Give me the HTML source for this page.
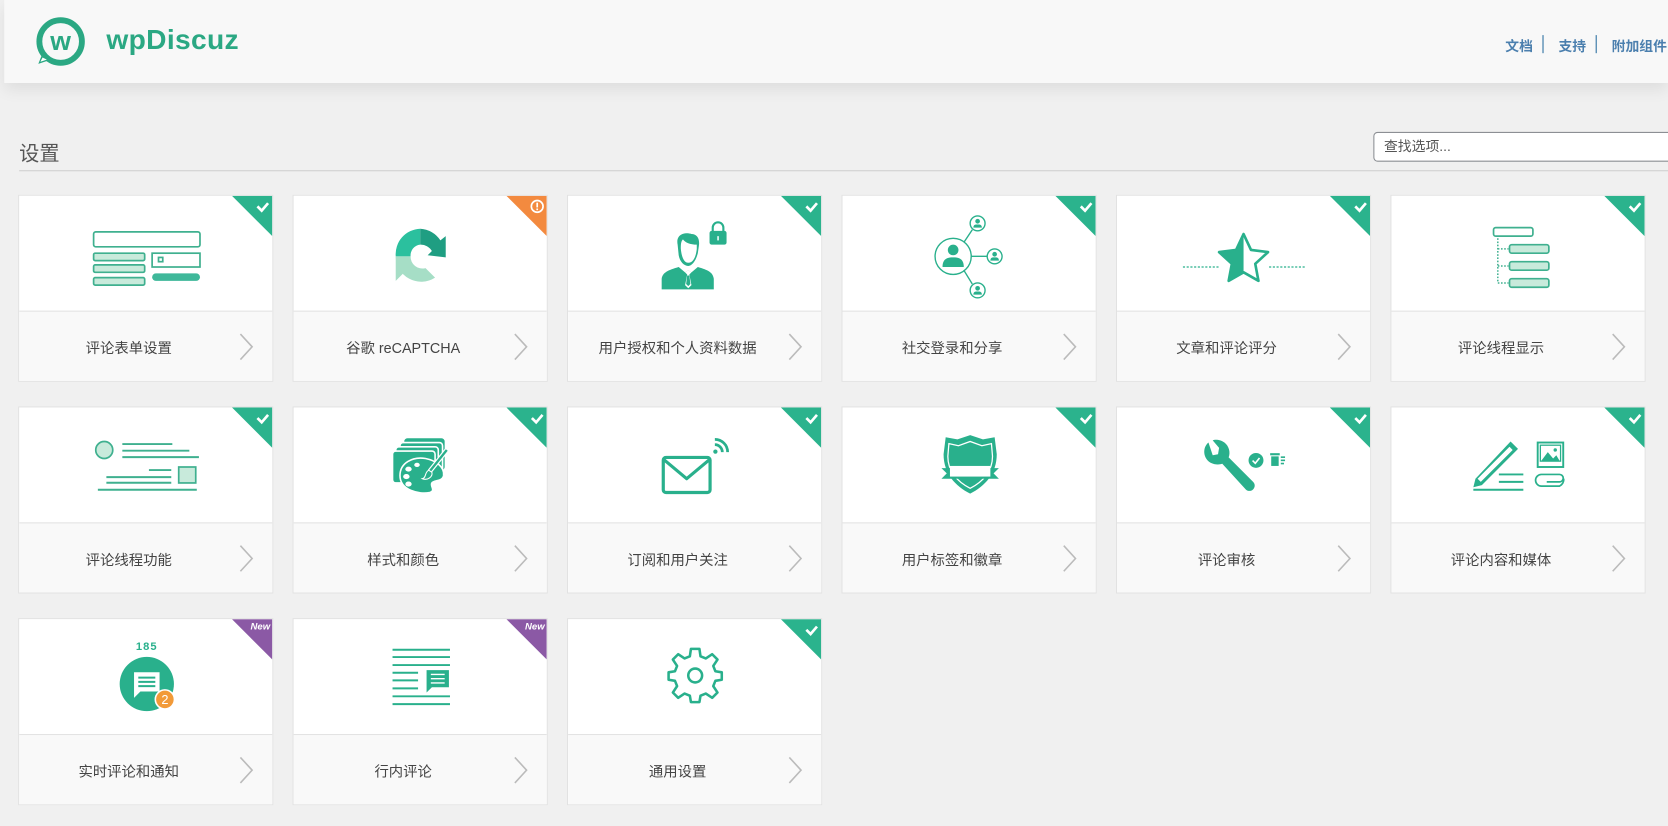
<!DOCTYPE html>
<html><head><meta charset="utf-8">
<style>
html,body{margin:0;padding:0;background:#f0f0f0;overflow:hidden;width:1668px;height:825px}
#w{position:absolute;left:0;top:0;width:1568px;height:776px;transform:scale(1.06378);transform-origin:0 0;font-family:"Liberation Sans","Noto Sans CJK SC",sans-serif}
.hdr{position:absolute;left:4px;top:0;width:1564px;height:78px;background:#f8f8f8;box-shadow:0 6px 14px rgba(0,0,0,0.08)}
.logo{position:absolute;left:96px;top:22px;font-size:26.5px;font-weight:bold;color:#2ba883;letter-spacing:0.3px}
.nav{position:absolute;top:33px;font-size:13px;font-weight:bold;color:#4b7fae}
.sep{position:absolute;top:33px;width:1px;height:17px;background:#2a6fa0}
.title{position:absolute;left:18px;top:130px;font-size:19px;color:#555}
.hl{position:absolute;left:18px;top:160px;width:1550px;height:1px;background:#cfcfcf}
.search{position:absolute;left:1291px;top:124px;width:290px;height:28px;border:1px solid #8c8f94;border-radius:4px;background:#fff;font-size:13px;color:#555;line-height:26px;padding-left:9px;box-sizing:border-box}
.card{position:absolute;width:240px;height:176px;background:#fff;border:1px solid #e2e2e2;box-sizing:border-box;overflow:hidden}
.card .ic{position:absolute;left:0;top:0;width:238px;height:108px}
.card .lb{position:absolute;left:0;top:108px;width:238px;height:66px;background:#f9f9f9;border-top:1px solid #e3e3e3}
.card .t{position:absolute;left:0;width:206px;top:23px;text-align:center;font-size:13.5px;color:#444}
.card .ch{position:absolute;left:207px;top:20px}
.card .tri{position:absolute;right:0;top:0}
</style></head><body><div id="w">
<div class="hdr">
<svg style="position:absolute;left:26px;top:14px" width="56" height="54" viewBox="0 0 56 54">
<circle cx="27" cy="25" r="20" fill="none" stroke="#2ba883" stroke-width="5.5"/>
<path d="M10 36 L6 46 L18 42 Z" fill="#2ba883"/>
<path d="M10 40 L8 44 L14 42Z" fill="#fff"/>
<text x="27" y="33" text-anchor="middle" font-family="Liberation Sans" font-weight="bold" font-size="25" fill="#2ba883">w</text>
</svg>
<div class="logo">wpDiscuz</div>
<div class="nav" style="left:1411px">文档</div><div class="sep" style="left:1446px"></div>
<div class="nav" style="left:1461px">支持</div><div class="sep" style="left:1496px"></div>
<div class="nav" style="left:1511px">附加组件</div>
</div>
<div class="title">设置</div>
<div class="hl"></div>
<div class="search">查找选项...</div>

<!-- Row 1 -->
<div class="card" style="left:17px;top:183px">
<svg class="ic" viewBox="0 0 238 108"><g stroke="#3fb08f" stroke-width="1.6">
<rect x="70" y="34" width="100" height="14" rx="2" fill="#fff"/>
<rect x="70" y="54" width="48" height="7" rx="1.5" fill="#c8eadb"/>
<rect x="70" y="65" width="48" height="7" rx="1.5" fill="#c8eadb"/>
<rect x="70" y="77" width="48" height="7" rx="1.5" fill="#c8eadb"/>
<rect x="125" y="54" width="45" height="13" fill="#fff"/>
<rect x="131" y="58" width="4" height="4" fill="#fff"/></g>
<rect x="125" y="73" width="45" height="7" rx="3.5" fill="#3fb89a"/></svg>
<div class="lb"><div class="t">评论表单设置</div><svg class="ch" width="14" height="26"><polyline points="1,1 12,13 1,25" fill="none" stroke="#bbb" stroke-width="1.5"/></svg></div>
<svg class="tri" width="38" height="38"><polygon points="0,0 38,0 38,38" fill="#2bb38d"/><polyline points="24,10 28,14 34,7" fill="none" stroke="#fff" stroke-width="2.5"/></svg>
</div>

<div class="card" style="left:275px;top:183px">
<svg class="ic" viewBox="0 0 238 108">
<path d="M119 31 A24 24 0 0 0 96 57 L110 57 A10 10 0 0 1 119 46 Z" fill="#2bc09e"/>
<path d="M119 31 A24 24 0 0 1 138 42 L143 38 L143 58 L126 56 L130 52 A12 12 0 0 0 119 46 Z" fill="#1f9e82"/>
<path d="M96 57 A24 24 0 0 0 133 77 L124 68 A11 11 0 0 1 110 57 Z" fill="#a6dec6"/>
<path d="M96 57 L96 80 L104 72 Z" fill="#a6dec6"/>
</svg>
<div class="lb"><div class="t">谷歌 reCAPTCHA</div><svg class="ch" width="14" height="26"><polyline points="1,1 12,13 1,25" fill="none" stroke="#bbb" stroke-width="1.5"/></svg></div>
<svg class="tri" width="38" height="38"><polygon points="0,0 38,0 38,38" fill="#f38a3f"/><circle cx="29" cy="10" r="5.5" fill="none" stroke="#fff" stroke-width="1.6"/><rect x="28.2" y="6.5" width="1.6" height="4.5" fill="#fff"/><rect x="28.2" y="12" width="1.6" height="1.6" fill="#fff"/></svg>
</div>

<div class="card" style="left:533px;top:183px">
<svg class="ic" viewBox="0 0 238 108" fill="#29b08c">
<path d="M103 46 C101 36 110 34 116 36 C121 36 124 40 123 47 L122 54 C120 62 116 66 113 66 C109 66 105 62 104 56 Z"/>
<path d="M106 50 C107 60 110 63 113 63 C117 63 120 59 121 50 L121 46 C115 46 110 44 108 41 C106 43 106 46 106 50 Z" fill="#fff"/>
<path d="M88 78 C89 72 94 70 104 67 L110 72 L113 70 L116 72 L122 67 C132 70 136 72 137 78 L137 88 L88 88 Z"/>
<path d="M110 72 L113 70 L116 72 L114 74 L116 84 L113 87 L110 84 L112 74 Z" fill="#fff"/>
<path d="M112 75 L114 75 L115 83 L113 85 L111 83 Z"/>
<rect x="133" y="33" width="16" height="13" rx="2"/>
<path d="M136 34 L136 30 A5 5 0 0 1 146 30 L146 34" fill="none" stroke="#29b08c" stroke-width="2"/>
<rect x="140.3" y="38" width="1.4" height="4" fill="#fff"/>
</svg>
<div class="lb"><div class="t">用户授权和个人资料数据</div><svg class="ch" width="14" height="26"><polyline points="1,1 12,13 1,25" fill="none" stroke="#bbb" stroke-width="1.5"/></svg></div>
<svg class="tri" width="38" height="38"><polygon points="0,0 38,0 38,38" fill="#2bb38d"/><polyline points="24,10 28,14 34,7" fill="none" stroke="#fff" stroke-width="2.5"/></svg>
</div>

<div class="card" style="left:791px;top:183px">
<svg class="ic" viewBox="0 0 238 108"><g stroke="#29b08c" stroke-width="1.3" fill="none">
<circle cx="104" cy="57" r="17"/><circle cx="127" cy="26" r="7"/><circle cx="143" cy="57" r="7"/><circle cx="127" cy="89" r="7"/>
<line x1="114" y1="44" x2="122" y2="32"/><line x1="121" y1="57" x2="136" y2="57"/><line x1="114" y1="70" x2="122" y2="83"/></g>
<g fill="#29b08c"><circle cx="104" cy="51" r="5"/><path d="M94 67 C94 59 99 58 104 58 C109 58 114 59 114 67 Z"/>
<circle cx="127" cy="24" r="2.2"/><path d="M123 30 C123 27 125 27 127 27 C129 27 131 27 131 30Z"/>
<circle cx="143" cy="55" r="2.2"/><path d="M139 61 C139 58 141 58 143 58 C145 58 147 58 147 61Z"/>
<circle cx="127" cy="87" r="2.2"/><path d="M123 93 C123 90 125 90 127 90 C129 90 131 90 131 93Z"/></g></svg>
<div class="lb"><div class="t">社交登录和分享</div><svg class="ch" width="14" height="26"><polyline points="1,1 12,13 1,25" fill="none" stroke="#bbb" stroke-width="1.5"/></svg></div>
<svg class="tri" width="38" height="38"><polygon points="0,0 38,0 38,38" fill="#2bb38d"/><polyline points="24,10 28,14 34,7" fill="none" stroke="#fff" stroke-width="2.5"/></svg>
</div>

<div class="card" style="left:1049px;top:183px">
<svg class="ic" viewBox="0 0 238 108">
<line x1="62" y1="67" x2="96" y2="67" stroke="#29b08c" stroke-width="1.2" stroke-dasharray="2,1.5"/>
<line x1="143" y1="67" x2="178" y2="67" stroke="#29b08c" stroke-width="1.2" stroke-dasharray="2,1.5"/>
<path d="M119 36 L126 51 L142 53 L130 64 L133 80 L119 72 L105 80 L108 64 L96 53 L112 51 Z" fill="none" stroke="#29b08c" stroke-width="2.5" stroke-linejoin="round"/>
<path d="M119 36 L112 51 L96 53 L108 64 L105 80 L119 72 Z" fill="#29b08c"/>
</svg>
<div class="lb"><div class="t">文章和评论评分</div><svg class="ch" width="14" height="26"><polyline points="1,1 12,13 1,25" fill="none" stroke="#bbb" stroke-width="1.5"/></svg></div>
<svg class="tri" width="38" height="38"><polygon points="0,0 38,0 38,38" fill="#2bb38d"/><polyline points="24,10 28,14 34,7" fill="none" stroke="#fff" stroke-width="2.5"/></svg>
</div>

<div class="card" style="left:1307px;top:183px">
<svg class="ic" viewBox="0 0 238 108"><g stroke="#3fb08f" stroke-width="1.6">
<rect x="96" y="30" width="37" height="8" rx="2" fill="#fff"/>
<rect x="111" y="46" width="37" height="8" rx="2" fill="#c8eadb"/>
<rect x="111" y="62" width="37" height="8" rx="2" fill="#c8eadb"/>
<rect x="111" y="78" width="37" height="8" rx="2" fill="#c8eadb"/></g>
<path d="M100 40 V82 M100 50 H110 M100 66 H110 M100 82 H110" stroke="#3fb08f" stroke-width="1.4" stroke-dasharray="1.5,1.5" fill="none"/></svg>
<div class="lb"><div class="t">评论线程显示</div><svg class="ch" width="14" height="26"><polyline points="1,1 12,13 1,25" fill="none" stroke="#bbb" stroke-width="1.5"/></svg></div>
<svg class="tri" width="38" height="38"><polygon points="0,0 38,0 38,38" fill="#2bb38d"/><polyline points="24,10 28,14 34,7" fill="none" stroke="#fff" stroke-width="2.5"/></svg>
</div>

<!-- Row 2 -->
<div class="card" style="left:17px;top:382px">
<svg class="ic" viewBox="0 0 238 108">
<circle cx="80" cy="40" r="8" fill="#c8eadb" stroke="#3fb08f" stroke-width="1.6"/>
<rect x="150" y="56" width="16" height="15" fill="#c8eadb" stroke="#3fb08f" stroke-width="1.6"/>
<g stroke="#3fb08f" stroke-width="1.8">
<line x1="97" y1="34.4" x2="144" y2="34.4"/><line x1="97" y1="40.7" x2="160" y2="40.7"/><line x1="97" y1="46.7" x2="169" y2="46.7"/>
<line x1="122" y1="58.9" x2="143" y2="58.9"/><line x1="82" y1="65.5" x2="143" y2="65.5"/><line x1="82" y1="70.8" x2="143" y2="70.8"/><line x1="74" y1="77.4" x2="167" y2="77.4"/></g></svg>
<div class="lb"><div class="t">评论线程功能</div><svg class="ch" width="14" height="26"><polyline points="1,1 12,13 1,25" fill="none" stroke="#bbb" stroke-width="1.5"/></svg></div>
<svg class="tri" width="38" height="38"><polygon points="0,0 38,0 38,38" fill="#2bb38d"/><polyline points="24,10 28,14 34,7" fill="none" stroke="#fff" stroke-width="2.5"/></svg>
</div>

<div class="card" style="left:275px;top:382px">
<svg class="ic" viewBox="0 0 238 108" fill="#29b08c">
<rect x="104" y="29" width="38" height="30" rx="3"/>
<rect x="100" y="33" width="40" height="30" rx="3" stroke="#fff" stroke-width="1.5"/>
<rect x="96" y="37" width="40" height="30" rx="3" stroke="#fff" stroke-width="1.5"/>
<rect x="93" y="41" width="40" height="30" rx="3" stroke="#fff" stroke-width="1.5"/>
<path d="M100 64 C100 52 112 46 124 48 C134 50 142 56 141 64 C140 70 132 68 130 71 C128 74 134 78 128 80 C118 82 100 78 100 64 Z" stroke="#fff" stroke-width="1.5"/>
<g fill="#fff"><ellipse cx="108" cy="58" rx="3" ry="2.4"/><ellipse cx="106" cy="65" rx="3" ry="2.4"/><ellipse cx="108" cy="72" rx="3" ry="2.4"/><ellipse cx="116" cy="54" rx="2.6" ry="2"/></g>
<path d="M144 40 L128 60" stroke="#fff" stroke-width="4.5"/>
<path d="M144 40 L128 60" stroke="#29b08c" stroke-width="2.2"/>
<path d="M127 59 C123 61 125 66 121 67 C126 69 131 65 130 61 Z" stroke="#fff" stroke-width="1"/>
</svg>
<div class="lb"><div class="t">样式和颜色</div><svg class="ch" width="14" height="26"><polyline points="1,1 12,13 1,25" fill="none" stroke="#bbb" stroke-width="1.5"/></svg></div>
<svg class="tri" width="38" height="38"><polygon points="0,0 38,0 38,38" fill="#2bb38d"/><polyline points="24,10 28,14 34,7" fill="none" stroke="#fff" stroke-width="2.5"/></svg>
</div>

<div class="card" style="left:533px;top:382px">
<svg class="ic" viewBox="0 0 238 108">
<rect x="89.5" y="47" width="44" height="33" rx="2.5" fill="none" stroke="#29b08c" stroke-width="3"/>
<polyline points="90,49 111.5,67 133,49" fill="none" stroke="#29b08c" stroke-width="3" stroke-linejoin="round"/>
<circle cx="138.5" cy="41.5" r="2" fill="#29b08c"/>
<path d="M138 35 A7 7 0 0 1 145 42 M138 30 A12 12 0 0 1 150 42" fill="none" stroke="#29b08c" stroke-width="2.6"/>
</svg>
<div class="lb"><div class="t">订阅和用户关注</div><svg class="ch" width="14" height="26"><polyline points="1,1 12,13 1,25" fill="none" stroke="#bbb" stroke-width="1.5"/></svg></div>
<svg class="tri" width="38" height="38"><polygon points="0,0 38,0 38,38" fill="#2bb38d"/><polyline points="24,10 28,14 34,7" fill="none" stroke="#fff" stroke-width="2.5"/></svg>
</div>

<div class="card" style="left:791px;top:382px">
<svg class="ic" viewBox="0 0 238 108">
<path d="M97 28 L108 30 L120 26 L132 30 L143 28 L145 44 C145 62 134 74 120 81 C106 74 95 62 95 44 Z" fill="#29b08c"/>
<path d="M100 34 L109 36 L120 32 L131 36 L140 34 L141 46 C141 60 132 70 120 76 C108 70 99 60 99 46 Z" fill="none" stroke="#fff" stroke-width="1.2"/>
<path d="M93 57 L147 57 L142 62 L147 67 L93 67 L98 62 Z" fill="#29b08c"/>
<rect x="101" y="55" width="38" height="10" fill="#fff"/>
</svg>
<div class="lb"><div class="t">用户标签和徽章</div><svg class="ch" width="14" height="26"><polyline points="1,1 12,13 1,25" fill="none" stroke="#bbb" stroke-width="1.5"/></svg></div>
<svg class="tri" width="38" height="38"><polygon points="0,0 38,0 38,38" fill="#2bb38d"/><polyline points="24,10 28,14 34,7" fill="none" stroke="#fff" stroke-width="2.5"/></svg>
</div>

<div class="card" style="left:1049px;top:382px">
<svg class="ic" viewBox="0 0 238 108" fill="#29b08c">
<path d="M86 33 C80 38 81 48 88 52 C92 54 96 54 99 53 L121 77 C123 79 126 79 128 77 C130 75 130 72 128 70 L105 47 C107 42 105 36 101 33 C97 30 92 30 90 31 L96 38 L95 44 L90 45 Z"/>
<circle cx="130.7" cy="49.8" r="7"/>
<polyline points="127.5,50 130,52.5 134,47.5" fill="none" stroke="#fff" stroke-width="1.5"/>
<rect x="144" y="43" width="9" height="2"/><rect x="145" y="46" width="7" height="9"/>
<rect x="154" y="46" width="4" height="1.5"/><rect x="154" y="49" width="4" height="1.5"/><rect x="154" y="52" width="3" height="1.5"/>
</svg>
<div class="lb"><div class="t">评论审核</div><svg class="ch" width="14" height="26"><polyline points="1,1 12,13 1,25" fill="none" stroke="#bbb" stroke-width="1.5"/></svg></div>
<svg class="tri" width="38" height="38"><polygon points="0,0 38,0 38,38" fill="#2bb38d"/><polyline points="24,10 28,14 34,7" fill="none" stroke="#fff" stroke-width="2.5"/></svg>
</div>

<div class="card" style="left:1307px;top:382px">
<svg class="ic" viewBox="0 0 238 108" fill="#29b08c">
<path d="M112 32 L119 39 L85 73 L77 75 L79 67 Z"/>
<path d="M111 37 L114 40 L84 70 L81 67 Z" fill="#fff"/>
<g stroke="#29b08c" stroke-width="1.8"><line x1="101" y1="63" x2="124" y2="63"/><line x1="101" y1="70" x2="124" y2="70"/><line x1="77" y1="77.4" x2="124" y2="77.4"/></g>
<rect x="137.5" y="33" width="24" height="23" fill="none" stroke="#29b08c" stroke-width="1.8"/>
<rect x="140" y="35.5" width="19" height="15" fill="none" stroke="#29b08c" stroke-width="1.2"/>
<path d="M141 50 L147 42 L152 48 L155 45 L158 50 Z"/><circle cx="154" cy="40" r="1.6"/>
<path d="M146 70 L158 70 A3.5 3.5 0 0 0 158 63 L141 63 A5.5 5.5 0 0 0 141 74 L158 74 A7 7 0 0 0 162 67" fill="none" stroke="#29b08c" stroke-width="1.6"/>
</svg>
<div class="lb"><div class="t">评论内容和媒体</div><svg class="ch" width="14" height="26"><polyline points="1,1 12,13 1,25" fill="none" stroke="#bbb" stroke-width="1.5"/></svg></div>
<svg class="tri" width="38" height="38"><polygon points="0,0 38,0 38,38" fill="#2bb38d"/><polyline points="24,10 28,14 34,7" fill="none" stroke="#fff" stroke-width="2.5"/></svg>
</div>

<!-- Row 3 -->
<div class="card" style="left:17px;top:581px">
<svg class="ic" viewBox="0 0 238 108">
<text x="120" y="29" text-anchor="middle" font-family="Liberation Sans" font-weight="bold" font-size="10.5" fill="#29b08c" letter-spacing="1">185</text>
<circle cx="120" cy="61" r="25.5" fill="#29b08c"/>
<path d="M108 50 H132 V68 H114 L108 74 Z" fill="#fff"/>
<g stroke="#29b08c" stroke-width="1.8"><line x1="112" y1="55" x2="128" y2="55"/><line x1="112" y1="59" x2="128" y2="59"/><line x1="112" y1="63" x2="128" y2="63"/></g>
<circle cx="137" cy="75.5" r="9" fill="#f29a38" stroke="#fff" stroke-width="1.5"/>
<text x="137" y="80" text-anchor="middle" font-family="Liberation Sans" font-size="12" fill="#fff">2</text>
</svg>
<div class="lb"><div class="t">实时评论和通知</div><svg class="ch" width="14" height="26"><polyline points="1,1 12,13 1,25" fill="none" stroke="#bbb" stroke-width="1.5"/></svg></div>
<svg class="tri" width="38" height="38"><polygon points="0,0 38,0 38,38" fill="#8b59a5"/><text x="36" y="10" text-anchor="end" font-family="Liberation Sans" font-weight="bold" font-style="italic" font-size="9" fill="#fff">New</text></svg>
</div>

<div class="card" style="left:275px;top:581px">
<svg class="ic" viewBox="0 0 238 108"><g stroke="#29b08c" stroke-width="1.8">
<line x1="93" y1="28.8" x2="147" y2="28.8"/><line x1="93" y1="35.7" x2="147" y2="35.7"/><line x1="93" y1="43.2" x2="147" y2="43.2"/>
<line x1="93" y1="50.4" x2="117" y2="50.4"/><line x1="93" y1="57.6" x2="117" y2="57.6"/><line x1="93" y1="65.1" x2="117" y2="65.1"/>
<line x1="93" y1="72.6" x2="147" y2="72.6"/><line x1="93" y1="79.9" x2="147" y2="79.9"/></g>
<path d="M125 48 H146 V64 H130 L125 69 Z" fill="#29b08c"/>
<g stroke="#fff" stroke-width="1.3"><line x1="129" y1="52" x2="142" y2="52"/><line x1="129" y1="56" x2="142" y2="56"/><line x1="129" y1="60" x2="142" y2="60"/></g>
</svg>
<div class="lb"><div class="t">行内评论</div><svg class="ch" width="14" height="26"><polyline points="1,1 12,13 1,25" fill="none" stroke="#bbb" stroke-width="1.5"/></svg></div>
<svg class="tri" width="38" height="38"><polygon points="0,0 38,0 38,38" fill="#8b59a5"/><text x="36" y="10" text-anchor="end" font-family="Liberation Sans" font-weight="bold" font-style="italic" font-size="9" fill="#fff">New</text></svg>
</div>

<div class="card" style="left:533px;top:581px">
<svg class="ic" viewBox="0 0 238 108">
<g transform="translate(119.5,53)" fill="none" stroke="#29b08c" stroke-width="2.4" stroke-linejoin="round">
<path d="M-4,-25 L4,-25 L5,-18 L10,-16 L16,-20 L21,-15 L17,-9 L19,-4 L25,-3 L25,4 L19,5 L17,10 L21,16 L16,21 L10,17 L5,19 L4,25 L-4,25 L-5,19 L-10,17 L-16,21 L-21,16 L-17,10 L-19,5 L-25,4 L-25,-3 L-19,-4 L-17,-9 L-21,-15 L-16,-20 L-10,-16 L-5,-18 Z"/>
<circle r="6.5"/></g></svg>
<div class="lb"><div class="t">通用设置</div><svg class="ch" width="14" height="26"><polyline points="1,1 12,13 1,25" fill="none" stroke="#bbb" stroke-width="1.5"/></svg></div>
<svg class="tri" width="38" height="38"><polygon points="0,0 38,0 38,38" fill="#2bb38d"/><polyline points="24,10 28,14 34,7" fill="none" stroke="#fff" stroke-width="2.5"/></svg>
</div>

</div></body></html>
